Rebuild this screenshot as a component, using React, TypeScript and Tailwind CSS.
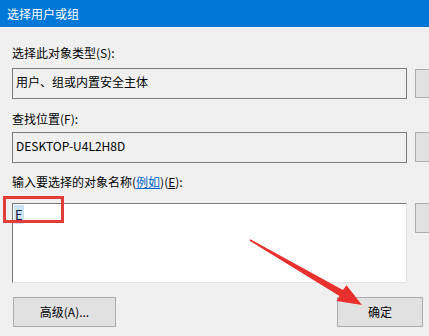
import React from "react";

const font = { fontFamily: '"Noto Sans CJK SC", "Noto Sans", sans-serif' };

export default function App() {
  return (
    <div
      className="relative w-[429px] h-[336px] overflow-hidden bg-[#f0f0f0] text-[12px] text-black"
      style={font}
    >
      {/* Title bar */}
      <div className="h-[27px] bg-[#0078d7] text-white text-[12px] leading-[27px] pl-[7px]">
        选择用户或组
      </div>

      <div className="pl-[12px] w-[520px]">
        {/* Object type */}
        <div className="mt-[18px] h-[16px] leading-[16px]">选择此对象类型(S):</div>
        <div className="mt-[7px] flex gap-[8px]">
          <div className="w-[395px] h-[31px] border border-[#7a7a7a] bg-[#f0f0f0] pl-[3px] pt-[5px] leading-[16px]">
            用户、组或内置安全主体
          </div>
          <div className="mt-[1px] w-[80px] h-[29px] border border-[#adadad] bg-[#e1e1e1]" />
        </div>

        {/* Location */}
        <div className="mt-[12px] h-[16px] leading-[16px]">查找位置(F):</div>
        <div className="mt-[5px] flex gap-[8px]">
          <div className="w-[395px] h-[31px] border border-[#7a7a7a] bg-[#f0f0f0] pl-[3px] pt-[5px] leading-[16px]">
            DESKTOP-U4L2H8D
          </div>
          <div className="w-[80px] h-[30px] border border-[#adadad] bg-[#e1e1e1]" />
        </div>

        {/* Object names */}
        <div className="mt-[11px] h-[16px] leading-[16px]">
          输入要选择的对象名称(<span className="text-[#0066cc] underline">例如</span>)(<span className="underline">E</span>):
        </div>
        <div className="mt-[13px] flex gap-[8px]">
          <div className="w-[395px] h-[80px] border-t border-l border-t-[#7a7a7a] border-l-[#7a7a7a] border-b border-r border-b-[#e3e3e3] border-r-[#e3e3e3] bg-white pl-[1px] pt-[3px] text-[13px] leading-[15px]">
            <span className="bg-[#cce4f7] text-[#1a1a40] px-[1px]">E</span>
          </div>
          <div className="w-[80px] h-[30px] border border-[#adadad] bg-[#e1e1e1]" />
        </div>

        {/* Bottom buttons */}
        <div className="mt-[14px] flex">
          <div className="ml-[1px] w-[103px] h-[30px] border border-[#adadad] bg-[#e1e1e1] flex items-center justify-center leading-[16px]">
            高级(A)...
          </div>
          <div className="ml-[221px] w-[86px] h-[30px] border border-[#adadad] bg-[#e1e1e1] flex items-center justify-center leading-[16px]">
            确定
          </div>
        </div>
      </div>

      {/* Red highlight box annotation */}
      <div className="absolute left-[3px] top-[196px] w-[61px] h-[27px] border-[3px] border-[#e43b3b]" />

      {/* Red arrow annotation */}
      <svg className="absolute left-0 top-0" width="429" height="336" viewBox="0 0 429 336">
        <polygon
          points="250.4,239.3 342.9,290 346.5,285.2 362,305 336.5,301 339.5,296 249.6,240.7"
          fill="#e8302e"
        />
      </svg>
    </div>
  );
}
